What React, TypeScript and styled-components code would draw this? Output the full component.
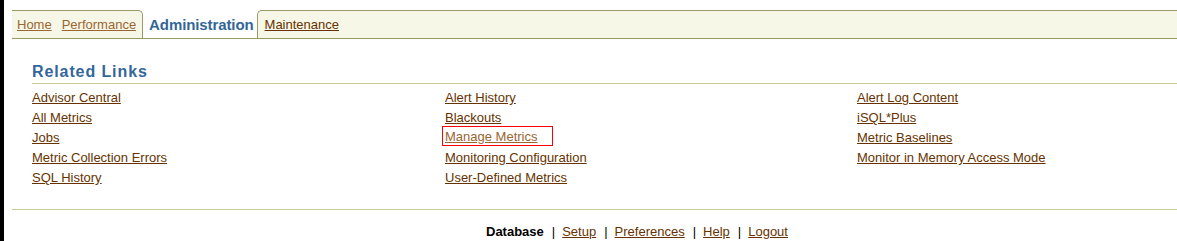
import styled, {createGlobalStyle} from "styled-components";

const GlobalStyle = createGlobalStyle`
    body {
        margin: 0;
        background: #fff;
        font-family: "Liberation Sans", Arial, sans-serif;
    }
`

const columns: { label: string, current?: boolean }[][] = [
    [{label: "Advisor Central"}, {label: "All Metrics"}, {label: "Jobs"}, {label: "Metric Collection Errors"}, {label: "SQL History"}],
    [{label: "Alert History"}, {label: "Blackouts"}, {label: "Manage Metrics", current: true}, {label: "Monitoring Configuration"}, {label: "User-Defined Metrics"}],
    [{label: "Alert Log Content"}, {label: "iSQL*Plus"}, {label: "Metric Baselines"}, {label: "Monitor in Memory Access Mode"}],
]

const footerLinks = ["Setup", "Preferences", "Help", "Logout"]

export default function App() {
    return (
        <Page>
            <GlobalStyle/>
            <TabBar>
                <TabGroup>
                    <TabLink href="#" $visited>Home</TabLink>
                    <TabLink href="#" $visited>Performance</TabLink>
                </TabGroup>
                <ActiveTab>Administration</ActiveTab>
                <RestTab>
                    <TabLink href="#">Maintenance</TabLink>
                </RestTab>
            </TabBar>
            <Content>
                <Heading>Related Links</Heading>
                <LinkGrid>
                    {columns.map((col, i) => (
                        <Column key={i}>
                            {col.map(item => (
                                <Row key={item.label}>
                                    {item.current ? (
                                        <Highlight>
                                            <Link href="#" $visited>{item.label}</Link>
                                        </Highlight>
                                    ) : (
                                        <Link href="#">{item.label}</Link>
                                    )}
                                </Row>
                            ))}
                        </Column>
                    ))}
                </LinkGrid>
            </Content>
            <Footer>
                <FooterCurrent>Database</FooterCurrent>
                {footerLinks.map(l => (
                    <FooterItem key={l}>
                        <Separator>|</Separator>
                        <FooterLink href="#">{l}</FooterLink>
                    </FooterItem>
                ))}
            </Footer>
        </Page>
    );
}

const Page = styled.div`
    min-height: 241px;
    box-sizing: border-box;
    border-left: 4px solid #000;
    padding: 10px 0 0 8px;
`

const TabBar = styled.div`
    display: flex;
    border-bottom: 1px solid #999966;
`

const TabGroup = styled.div`
    display: flex;
    column-gap: 10px;
    height: 27px;
    padding: 0 6px 0 5px;
    background: #f7f7e7;
    border-top: 1px solid #999966;
    border-right: 1px solid #999966;
    border-top-right-radius: 5px;
`

const TabLink = styled.a<{ $visited?: boolean }>`
    font-size: 13px;
    line-height: 27px;
    color: ${p => p.$visited ? "#996633" : "#663300"};
    text-decoration: underline;
`

const ActiveTab = styled.div`
    height: 28px;
    padding: 1px 3px 0 6px;
    box-sizing: border-box;
    font-size: 15px;
    font-weight: bold;
    line-height: 28px;
    letter-spacing: -0.1px;
    color: #336699;
    background: #fff;
`

const RestTab = styled.div`
    flex: 1;
    height: 27px;
    padding-left: 7px;
    background: #f7f7e7;
    border-top: 1px solid #999966;
    border-left: 1px solid #999966;
    border-top-left-radius: 5px;
`

const Content = styled.div`
    padding-left: 20px;
`

const Heading = styled.h2`
    margin: 23px 0 0;
    padding-bottom: 1px;
    font-size: 16px;
    line-height: 20px;
    font-weight: bold;
    letter-spacing: 0.9px;
    color: #336699;
    border-bottom: 1px solid #cccc99;
`

const LinkGrid = styled.div`
    display: grid;
    grid-template-columns: 413px 412px 1fr;
    margin-top: 3px;
`

const Column = styled.div`
    display: flex;
    flex-direction: column;
`

const Row = styled.div`
    height: 20px;
    line-height: 20px;
`

const Link = styled.a<{ $visited?: boolean }>`
    font-size: 13px;
    color: ${p => p.$visited ? "#996633" : "#663300"};
    text-decoration: underline;
`

const Highlight = styled.div`
    width: 111px;
    height: 20px;
    box-sizing: border-box;
    margin: -1px 0 0 -3px;
    padding-left: 2px;
    border: 1px solid #ff0000;
    line-height: 18px;
`

const Footer = styled.div`
    display: flex;
    margin-top: 22px;
    padding: 14px 0 0 474px;
    border-top: 1px solid #cccc99;
    font-size: 13px;
    line-height: 16px;
`

const FooterCurrent = styled.span`
    font-weight: bold;
    color: #000;
`

const FooterItem = styled.span`
    display: flex;
`

const Separator = styled.span`
    margin: 0 7px 0 8px;
    color: #000;
`

const FooterLink = styled.a`
    color: #663300;
    text-decoration: underline;
`
